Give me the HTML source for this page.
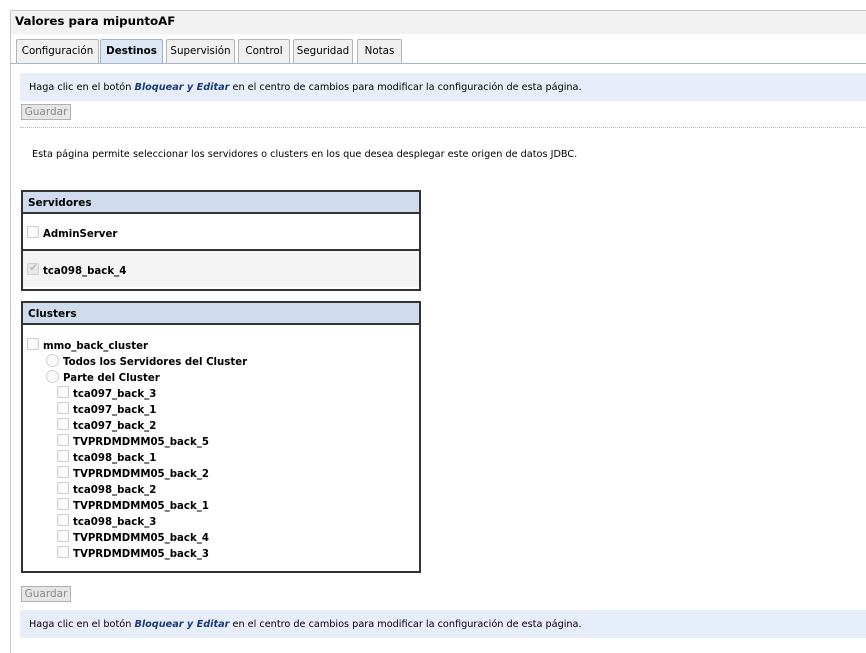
<!DOCTYPE html>
<html><head><meta charset="utf-8"><style>
*{margin:0;padding:0;box-sizing:border-box}
body{width:866px;height:653px;background:#fff;font-family:"DejaVu Sans","Liberation Sans",sans-serif;font-size:11px;color:#000;position:relative;overflow:hidden}
.a{position:absolute;white-space:nowrap}
.tab{position:absolute;top:39px;height:25px;border:1px solid #b5b5b5;border-bottom:none;background:#f0f0f0;line-height:22px;text-align:center;font-size:10.3px;border-radius:2px 2px 0 0}
.info{position:absolute;left:20px;right:0;height:28px;background:#e8eef9;line-height:30px;padding-left:9px;font-size:9.7px}
.btn{position:absolute;left:21px;width:50px;height:16px;background:#e6e6e6;border:1px solid #b0b0b0;color:#888;font-size:10.5px;line-height:14px;text-align:center}
.tbl{position:absolute;left:21px;width:400px;border:2px solid #333}
.hd{background:#cfdcee;height:22px;border-bottom:2px solid #333;font-weight:bold;line-height:22px;padding-left:5px;font-size:10.5px}
.cb{position:absolute;width:12px;height:12px;border:1px solid #cfcfcf;border-radius:2px;background:#fafafa}
.rd{position:absolute;width:13px;height:13px;border:1px solid #cfcfcf;border-radius:50%;background:#fafafa}
.b{font-weight:bold;position:absolute;white-space:nowrap;font-size:10.2px}
.c .b{margin-top:2px}
</style></head><body>
<div class="a" style="left:10px;top:10px;width:1px;height:643px;background:#c8c8c8"></div>
<div class="a" style="left:10px;top:10px;right:0;height:1px;background:#c8c8c8"></div>
<div class="a" style="left:11px;top:11px;right:0;height:23px;background:#f2f2f2"></div>
<div class="a" style="left:15px;top:14px;font-weight:bold;font-size:11.8px">Valores para mipuntoAF</div>
<div class="tab" style="left:16px;width:83px">Configuración</div>
<div class="tab" style="left:100px;width:63px;background:#dde7f3;font-weight:bold;border-color:#9cb3cf">Destinos</div>
<div class="tab" style="left:166px;width:69px">Supervisión</div>
<div class="tab" style="left:238px;width:52px">Control</div>
<div class="tab" style="left:293px;width:60px">Seguridad</div>
<div class="tab" style="left:357px;width:45px">Notas</div>
<div class="a" style="left:10px;top:63px;right:0;height:1px;background:#a8b8cc"></div>
<div class="info" style="top:73px">Haga clic en el botón <b><i style="color:#1a3a7a">Bloquear y Editar</i></b> en el centro de cambios para modificar la configuración de esta página.</div>
<div class="btn" style="top:104px">Guardar</div>
<div class="a" style="left:20px;top:127px;right:0;border-top:1px dotted #bbb"></div>
<div class="a" style="left:32px;top:149px;font-size:9.7px">Esta página permite seleccionar los servidores o clusters en los que desea desplegar este origen de datos JDBC.</div>
<div class="tbl" style="top:190px;height:101px">
<div class="hd">Servidores</div>
<div style="position:relative;height:37px;border-bottom:2px solid #333"><div class="cb" style="left:4px;top:12px"></div><div class="b" style="left:20px;top:15px">AdminServer</div></div>
<div style="position:relative;height:36px;background:#f4f4f4"><div class="cb" style="left:4px;top:12px;background:#e8e8e8"><span style="position:absolute;left:1px;top:-3px;color:#bbb;font-size:11px">✔</span></div><div class="b" style="left:20px;top:15px">tca098_back_4</div></div>
</div>
<div class="tbl" style="top:301px;height:272px">
<div class="hd">Clusters</div>
<div class="c" style="position:relative">
<div class="cb" style="left:4px;top:13px"></div><div class="b" style="left:20px;top:14px">mmo_back_cluster</div>
<div class="rd" style="left:23px;top:29px"></div><div class="b" style="left:40px;top:30px">Todos los Servidores del Cluster</div>
<div class="rd" style="left:23px;top:45px"></div><div class="b" style="left:40px;top:46px">Parte del Cluster</div>
<div class="cb" style="left:34px;top:61px"></div><div class="b" style="left:50px;top:62px">tca097_back_3</div>
<div class="cb" style="left:34px;top:77px"></div><div class="b" style="left:50px;top:78px">tca097_back_1</div>
<div class="cb" style="left:34px;top:93px"></div><div class="b" style="left:50px;top:94px">tca097_back_2</div>
<div class="cb" style="left:34px;top:109px"></div><div class="b" style="left:50px;top:110px">TVPRDMDMM05_back_5</div>
<div class="cb" style="left:34px;top:125px"></div><div class="b" style="left:50px;top:126px">tca098_back_1</div>
<div class="cb" style="left:34px;top:141px"></div><div class="b" style="left:50px;top:142px">TVPRDMDMM05_back_2</div>
<div class="cb" style="left:34px;top:157px"></div><div class="b" style="left:50px;top:158px">tca098_back_2</div>
<div class="cb" style="left:34px;top:173px"></div><div class="b" style="left:50px;top:174px">TVPRDMDMM05_back_1</div>
<div class="cb" style="left:34px;top:189px"></div><div class="b" style="left:50px;top:190px">tca098_back_3</div>
<div class="cb" style="left:34px;top:205px"></div><div class="b" style="left:50px;top:206px">TVPRDMDMM05_back_4</div>
<div class="cb" style="left:34px;top:221px"></div><div class="b" style="left:50px;top:222px">TVPRDMDMM05_back_3</div>
</div></div>
<div class="btn" style="top:586px">Guardar</div>
<div class="info" style="top:610px">Haga clic en el botón <b><i style="color:#1a3a7a">Bloquear y Editar</i></b> en el centro de cambios para modificar la configuración de esta página.</div>
</body></html>
